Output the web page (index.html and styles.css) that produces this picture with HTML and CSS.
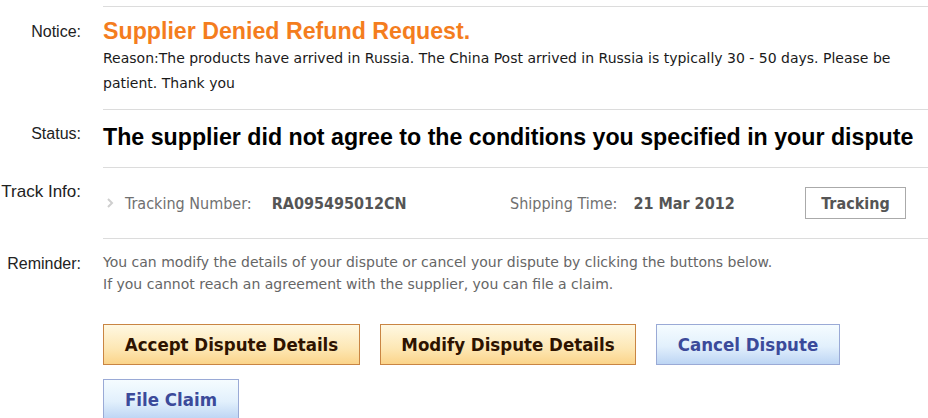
FILE: index.html
```html
<!DOCTYPE html>
<html>
<head>
<meta charset="utf-8">
<link rel="stylesheet" href="styles.css">
</head>
<body>
<div class="page">
  <div class="row top-row">
    <div class="label"></div>
    <div class="content top-line"></div>
  </div>
  <div class="row notice-row">
    <div class="label">Notice:</div>
    <div class="content">
      <h2 class="notice-title">Supplier Denied Refund Request.</h2>
      <p class="reason">Reason:The products have arrived in Russia. The China Post arrived in Russia is typically 30 - 50 days. Please be patient. Thank you</p>
    </div>
  </div>
  <div class="row status-row">
    <div class="label">Status:</div>
    <div class="content">
      <h2 class="status-title">The supplier did not agree to the conditions you specified in your dispute</h2>
    </div>
  </div>
  <div class="row track-row">
    <div class="label">Track Info:</div>
    <div class="content track">
      <div class="track-num">
        <svg class="arrow" width="8" height="10" viewBox="0 0 8 10"><path d="M2 1 L6 5 L2 9" fill="none" stroke="#cfcfcf" stroke-width="2"/></svg>
        <span class="k">Tracking Number:</span>
        <span class="v">RA095495012CN</span>
      </div>
      <div class="track-time">
        <span class="k">Shipping Time:</span>
        <span class="v">21 Mar 2012</span>
      </div>
      <button class="track-btn">Tracking</button>
    </div>
  </div>
  <div class="row reminder-row">
    <div class="label">Reminder:</div>
    <div class="content noline">
      <p class="reminder">You can modify the details of your dispute or cancel your dispute by clicking the buttons below.<br>If you cannot reach an agreement with the supplier, you can file a claim.</p>
      <div class="actions">
        <button class="btn orange accept">Accept Dispute Details</button>
        <button class="btn orange modify">Modify Dispute Details</button>
        <button class="btn blue cancel">Cancel Dispute</button>
        <button class="btn blue claim">File Claim</button>
      </div>
    </div>
  </div>
</div>
</body>
</html>
```

FILE: styles.css
```css
* { box-sizing: border-box; }
html, body { margin: 0; padding: 0; background: #fff; }
.page { width: 928px; font-family: "Liberation Sans", Arial, sans-serif; }

.row {
  display: grid;
  grid-template-columns: 81px 1fr;
  column-gap: 22px;
}
.label {
  text-align: right;
  font-size: 16px;
  color: #222;
  line-height: 20px;
  white-space: nowrap;
}
.content { border-bottom: 1px solid #dcdcdc; }
.content.noline { border-bottom: none; }

.top-row .content { height: 7px; }

.notice-row .label { padding-top: 15px; }
.notice-row .content { padding: 11px 0 13px; }
.notice-title {
  margin: 0;
  font-size: 23.2px;
  line-height: 26px;
  font-weight: bold;
  color: #f47d1e;
}
.reason {
  margin: 2px 0 0;
  font-family: "DejaVu Sans", sans-serif;
  font-size: 14px;
  line-height: 25px;
  color: #1a1a1a;
  padding-right: 20px;
}

.status-row .label { padding-top: 14px; }
.status-row .content { padding: 13px 0 16px; }
.status-title {
  margin: 0;
  font-size: 23.2px;
  line-height: 28px;
  font-weight: bold;
  color: #000;
  white-space: nowrap;
}

.track-row .label { padding-top: 14px; font-size: 17px; }
.track {
  display: flex;
  align-items: center;
  padding: 19px 22px 19px 0;
  font-family: "DejaVu Sans Condensed", "DejaVu Sans", sans-serif;
  font-size: 16px;
  color: #666;
}
.track-num { width: 407px; display: flex; align-items: center; }
.track-time { display: flex; align-items: center; }
.arrow { margin: 0 11px 0 3px; }
.track .k { color: #707070; }
.track .v { font-weight: bold; color: #555; }
.track-num .v { margin-left: 20px; }
.track-time .v { margin-left: 16px; }
.track-btn {
  margin-left: auto;
  width: 101px;
  height: 32px;
  border: 1px solid #aaa;
  background: #fff;
  font-family: "DejaVu Sans Condensed", "DejaVu Sans", sans-serif;
  font-weight: bold;
  font-size: 16px;
  color: #555;
  padding: 0;
}

.reminder-row .label { padding-top: 15px; }
.reminder-row .content { padding-top: 12px; }
.reminder {
  margin: 0;
  font-family: "DejaVu Sans", sans-serif;
  font-size: 14px;
  line-height: 22px;
  color: #666;
}
.actions {
  margin-top: 29px;
  display: flex;
  flex-wrap: wrap;
  column-gap: 20px;
  row-gap: 14px;
}
.btn {
  height: 41px;
  padding: 0;
  font-family: "DejaVu Sans Condensed", "DejaVu Sans", sans-serif;
  font-weight: bold;
  font-size: 18.5px;
}
.btn.orange {
  border: 1px solid #c98543;
  background: linear-gradient(#fff8e2, #fde7b4 60%, #fbd48a);
  color: #2e1300;
}
.btn.blue {
  border: 1px solid #9aaad6;
  background: linear-gradient(#f5fcff, #e2f0fc 55%, #bdd5f4);
  color: #3b4a9a;
}
.accept { width: 257px; }
.modify { width: 256px; }
.cancel { width: 184px; }
.claim { width: 136px; }
```
